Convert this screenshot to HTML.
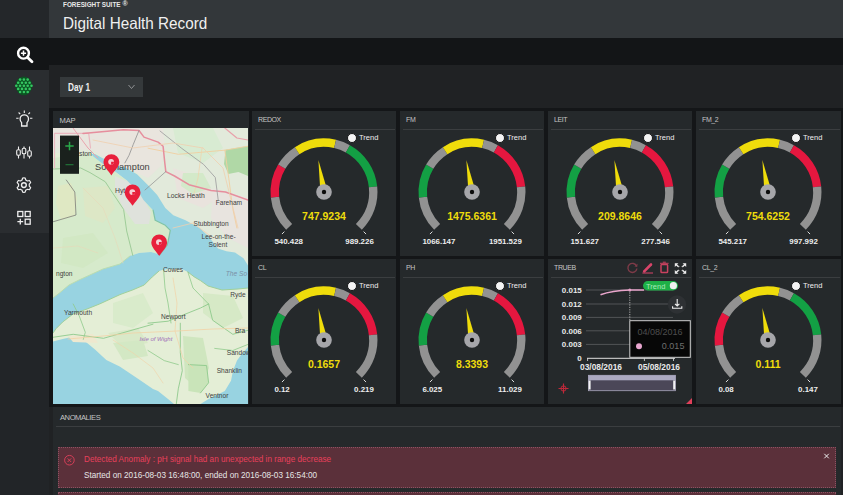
<!DOCTYPE html><html><head><meta charset="utf-8"><style>
*{margin:0;padding:0;box-sizing:border-box}
html,body{width:843px;height:495px;overflow:hidden;background:#202224;font-family:"Liberation Sans",sans-serif;position:relative}
.abs{position:absolute}
.panel{position:absolute;background:#25292b}
.ptitle{position:absolute;left:6px;top:5px;font-size:7px;color:#c4c4c4;letter-spacing:-0.4px}
.psep{position:absolute;left:3px;right:1px;top:18px;height:1px;background:#3b3e40}
.trend{position:absolute;left:92px;top:20px;width:40px;height:12px}
.trend .dot{position:absolute;left:3px;top:1.5px;width:10px;height:10px;border-radius:50%;background:#f4f4f4;border:1px solid #151617}
.trend .tt{position:absolute;left:15px;top:1.5px;font-size:7.5px;color:#eee;line-height:10px}
.gval{position:absolute;left:0;width:144px;text-align:center;font-size:10.5px;font-weight:bold;color:#efdc0b;line-height:12px}
.glab{position:absolute;width:60px;text-align:center;font-size:7.9px;font-weight:bold;color:#eee;line-height:10px}
</style></head><body>
<div class="abs" style="left:0;top:0;width:49px;height:38px;background:#24272a"></div>
<div class="abs" style="left:49px;top:0;width:794px;height:38px;background:#33373a"></div>
<div class="abs" style="left:63px;top:0px;font-size:7.3px;font-weight:bold;color:#e8e8e8;line-height:9px;transform:scaleX(0.87);transform-origin:0 0;white-space:nowrap">FORESIGHT SUITE</div><div class="abs" style="left:122.5px;top:0px;font-size:7px;font-weight:bold;color:#e8e8e8;line-height:8px">&#174;</div>
<div class="abs" style="left:62.5px;top:12.6px;font-size:16.5px;color:#f0f0f0;line-height:20px;transform:scaleX(0.925);transform-origin:0 0;white-space:nowrap">Digital Health Record</div>
<div class="abs" style="left:0;top:38px;width:49px;height:457px;background:#222528"></div><div class="abs" style="left:0;top:38px;width:49px;height:195px;background:#2a2d30"></div>
<div class="abs" style="left:0;top:38px;width:49px;height:32px;background:#131517"></div>
<div class="abs" style="left:49px;top:38px;width:794px;height:27px;background:#131517"></div>
<div class="abs" style="left:49px;top:65px;width:794px;height:430px;background:#202224"></div>
<div class="abs" style="left:49px;top:108px;width:794px;height:299px;background:#141618"></div>
<div class="abs" style="left:60px;top:77px;width:83px;height:20px;background:#35393b"></div>
<div class="abs" style="left:67.8px;top:81.5px;font-size:10.3px;font-weight:bold;color:#eee;line-height:12px;transform:scaleX(0.8);transform-origin:0 0;white-space:nowrap">Day 1</div><svg class="abs" style="left:127px;top:83px" width="9" height="8"><path d="M1.5,2 L4.5,5.5 L7.5,2" stroke="#9a9c9e" stroke-width="0.9" fill="none"/></svg>
<div class="panel" style="left:53px;top:111px;width:196px;height:293px"><div class="ptitle" style="font-size:7.6px;letter-spacing:-0.2px;left:6.5px">MAP</div></div>
<svg class="abs" style="left:53px;top:128px" width="195" height="276" viewBox="0 0 195 276" font-family="Liberation Sans, sans-serif"><rect x="0" y="0" width="195" height="276" fill="#e4eed6"/><path d="M0,0 L195,0 L195,137.4 L190.5,130.3 L182,124.6 L173.5,123.2 L165,120.4 L156,109 L141,100 L131,92 L120.3,87.2 L112.3,80.1 L104.2,67 L95,57 L84,46 L73,40 L63,38 L53,32 L42,25 L0,25Z" fill="#e2eadb" /><path d="M0,30 L38,25 L50,36 L61,43 L74,53 L86,64 L90,72 L100,82 L102,92 L112,97 L117.3,102.4 L116.3,107.4 L114.3,117 L107,126.5 L98,124 L86,125 L77,128 L67,136 L50,141 L20,155 L0,170Z" fill="#d6eacb" /><path d="M5,58 L18,55 L24,70 L22,88 L8,92 L3,75Z" fill="#dfe8c3" /><path d="M30,60 L55,58 L62,80 L50,95 L32,88Z" fill="#dde7c6" /><path d="M10,110 L40,105 L55,125 L30,140 L8,135Z" fill="#d2e8c4" /><path d="M0,0 L110,0 L112,20 L108,38 L95,50 L78,42 L60,36 L40,22 L0,20Z" fill="#e9e5de" /><path d="M62,48 L78,55 L90,70 L98,84 L96,96 L82,96 L70,80 L62,62Z" fill="#dfe2dc" /><path d="M120,40 L150,50 L165,70 L150,80 L125,70Z" fill="#e9e3dd" /><path d="M160,60 L195,70 L195,120 L175,110 L158,90Z" fill="#e8e4df" /><path d="M120,0 L160,0 L170,20 L150,35 L125,25Z" fill="#d8ebd2" /><path d="M172.5,21.8 L195,18 L195,48 L185.5,44 L175.4,46 L171,36Z" fill="#b0d8a6" /><path d="M130,45 L150,45 L158,60 L140,66 L128,58Z" fill="#d3e9c9" /><path d="M0,170 L6.5,165 L16,157 L26,152 L50,141 L67,136 L77,128 L86,125 L98,124 L107,126.5 L114.3,117 L116.3,107.4 L117.3,102.4 L112.3,97.3 L102.2,92.3 L100.1,82.2 L96,78 L90.5,72 L85.6,64 L74.3,52.7 L61.4,43 L50,36 L41,29 L38,26 L42,26 L53,32 L63,37.5 L72.7,39.8 L84,46.2 L95.3,57.5 L104.2,67 L112.3,80.1 L120.3,87.2 L132.5,92.3 L147,100.3 L155.6,108.6 L165,120.4 L173.5,123.2 L182,124.6 L190.5,130.3 L195,137.4 L195,160 L185,161 L169,162 L155,158 L147.5,152.6 L141.3,148.9 L134.9,144 L128.4,140.8 L110.6,141.6 L105.8,143.2 L99.3,148.9 L91.2,157 L80,161.8 L67,166.6 L46.5,176 L34,181 L20,186 L9.7,194 L3.2,200.5 L0,205Z" fill="#98d3e1" /><path d="M0,213.4 L9.7,211 L21,208.5 L32.3,213.4 L42,221.5 L53.3,232 L66.7,238.6 L85,250.7 L100,261 L105,263 L115,271 L121,276 L0,276Z" fill="#98d3e1" /><path d="M195,219 L188,227 L184,232.6 L180,242.7 L178,252.8 L171.8,263 L155.6,271 L147.5,276 L195,276Z" fill="#98d3e1" /><path d="M0,170 L6.5,165 L16,157 L26,152 L50,141 L67,136 L77,128" fill="none" stroke="#b9dcb0" stroke-width="1.0" stroke-linejoin="round" stroke-linecap="round" /><path d="M0,205 L3.2,200.5 L9.7,194 L20,186 L34,181 L46.5,176 L67,166.6 L80,161.8 L91.2,157 L99.3,148.9 L105.8,143.2" fill="none" stroke="#9fd09a" stroke-width="1.0" stroke-linejoin="round" stroke-linecap="round" /><path d="M134.9,144 L141.3,148.9 L147.5,152.6 L155,158 L169,162 L185,161 L195,160" fill="none" stroke="#9fd09a" stroke-width="1.0" stroke-linejoin="round" stroke-linecap="round" /><path d="M100.1,82.2 L102.2,92.3 L112.3,97.3 L117.3,102.4 L116.3,107.4 L114.3,117 L107,126.5" fill="none" stroke="#7fc3a6" stroke-width="1.2" stroke-linejoin="round" stroke-linecap="round" /><path d="M0,41 L27.7,40 L37,44.6 L52.2,53.7 L58.3,63 L70.6,81.4 L73.7,103 L79.8,127.5" fill="none" stroke="#98c893" stroke-width="0.9" stroke-linejoin="round" stroke-linecap="round" /><path d="M95,20.2 L125.3,26.3 L171.8,22.2 L195,18.2" fill="none" stroke="#f0cfa0" stroke-width="0.9" stroke-linejoin="round" stroke-linecap="round" /><path d="M171.8,22.2 L175.8,50.5 L179.8,80.8 L183.9,100" fill="none" stroke="#f0cfa0" stroke-width="0.9" stroke-linejoin="round" stroke-linecap="round" /><path d="M149,20 L145,50 L141,66" fill="none" stroke="#f0d2aa" stroke-width="0.7" stroke-linejoin="round" stroke-linecap="round" /><path d="M30,60 L50,80 L62,110 L70,135" fill="none" stroke="#e8d9b8" stroke-width="0.6" stroke-linejoin="round" stroke-linecap="round" /><path d="M0,120 L25,118 L45,125" fill="none" stroke="#e8d9b8" stroke-width="0.6" stroke-linejoin="round" stroke-linecap="round" /><path d="M60,175 L90,165 L100,185 L80,200 L60,195Z" fill="#d9ebcb" /><path d="M150,165 L180,168 L190,190 L170,200 L150,185Z" fill="#d6e9c6" /><path d="M130,208 L150,210 L156,240 L146,262 L132,250Z" fill="#cfe6bf" /><path d="M55,205 L85,200 L95,215 L70,220Z" fill="#d9e9c8" /><path d="M15,208 L40,206 L45,215 L20,214Z" fill="#eee8cf" /><path d="M1.5,40 L1.5,5.4 L35.7,5.4 L37.5,20" fill="none" stroke="#eab8c0" stroke-width="1.2" stroke-linejoin="round" stroke-linecap="round" /><path d="M30,5.4 L70.3,1.7 L86,2.5 L91,9.1 L105.1,14.1 L110.1,18.3 L111.8,34.9 L112.8,43.6 L121.5,48 L136,56.7 L158,62.5 L172.5,64 L195,72" fill="none" stroke="#e68e9d" stroke-width="1.5" stroke-linejoin="round" stroke-linecap="round" /><path d="M86,2.5 L80.2,16.6 L76,27.4 L71.9,34.9" fill="none" stroke="#8f8f8f" stroke-width="0.8" stroke-linejoin="round" stroke-linecap="round" /><path d="M171.8,0 L183.9,10 L195,12" fill="none" stroke="#e8a0aa" stroke-width="1.2" stroke-linejoin="round" stroke-linecap="round" /><path d="M107,3 L128.8,20.4 L150.6,36.4 L162.3,49.5 L165.2,72" fill="none" stroke="#a3a3a3" stroke-width="0.9" stroke-linejoin="round" stroke-linecap="round" /><path d="M20,0 L35,20 L45,30" fill="none" stroke="#e9a4ae" stroke-width="1.0" stroke-linejoin="round" stroke-linecap="round" /><path d="M40,12 L80,20 L120,15 L150,20" fill="none" stroke="#f0cfae" stroke-width="0.8" stroke-linejoin="round" stroke-linecap="round" /><path d="M13.3,52 L21.8,64 L23,87 L0,93.8" fill="none" stroke="#6f6f6f" stroke-width="0.7" stroke-linejoin="round" stroke-linecap="round" /><path d="M112.8,43.6 L100,55 L92,62" fill="none" stroke="#8c8c8c" stroke-width="0.7" stroke-linejoin="round" stroke-linecap="round" /><path d="M120,100 L140,95 L160,110" fill="none" stroke="#f0cfae" stroke-width="0.8" stroke-linejoin="round" stroke-linecap="round" /><path d="M150,20 L170,40 L175,60 L185,100" fill="none" stroke="#f0cfae" stroke-width="0.8" stroke-linejoin="round" stroke-linecap="round" /><path d="M135.4,236.6 L153.6,236.6 L155.6,254.8 L147.5,264.9 L135.4,262.9Z" fill="#c9e4b9" /><path d="M60,215 L90,212 L95,228 L70,232Z" fill="#d3e8c4" /><path d="M95,195.2 L115.2,193.2 L127.3,188.1 L147.5,180 L155.6,176" fill="none" stroke="#8fca8c" stroke-width="0.9" stroke-linejoin="round" stroke-linecap="round" /><path d="M127.3,195.2 L127.3,224.5 L129.3,242.7 L125.3,260.8 L123.3,276" fill="none" stroke="#8fca8c" stroke-width="0.9" stroke-linejoin="round" stroke-linecap="round" /><path d="M135.4,236.6 L153.6,237.6 L155.6,254.8 L147.5,264.9" fill="none" stroke="#8fca8c" stroke-width="0.9" stroke-linejoin="round" stroke-linecap="round" /><path d="M155.6,176 L159.6,192.2 L179.8,206.3 L195,202.3" fill="none" stroke="#8fca8c" stroke-width="0.9" stroke-linejoin="round" stroke-linecap="round" /><path d="M161.7,220.4 L179.8,222.5 L195,216.4" fill="none" stroke="#8fca8c" stroke-width="0.8" stroke-linejoin="round" stroke-linecap="round" /><path d="M95,222.5 L111.2,232.6 L125.3,236.6" fill="none" stroke="#8fca8c" stroke-width="0.8" stroke-linejoin="round" stroke-linecap="round" /><path d="M0,209.3 L20.2,206.3 L50.5,210.3 L100,196.2" fill="none" stroke="#8fca8c" stroke-width="0.9" stroke-linejoin="round" stroke-linecap="round" /><path d="M20.2,176 L26.3,188.1 L32.3,204.3 L30.3,211.4" fill="none" stroke="#8fca8c" stroke-width="0.8" stroke-linejoin="round" stroke-linecap="round" /><path d="M110.6,141.6 L112,160 L115,175 L118,195" fill="none" stroke="#8fca8c" stroke-width="0.8" stroke-linejoin="round" stroke-linecap="round" /><path d="M134.9,144 L140,160 L155.6,176" fill="none" stroke="#8fca8c" stroke-width="0.8" stroke-linejoin="round" stroke-linecap="round" /><path d="M15,211 L50,208 L80,205 L124,203 L160,201 L195,200" fill="none" stroke="#f2d2a6" stroke-width="0.8" stroke-linejoin="round" stroke-linecap="round" /><path d="M120,150 L124,175 L122,203 L130,230 L140,240" fill="none" stroke="#f2d2a6" stroke-width="0.7" stroke-linejoin="round" stroke-linecap="round" /><path d="M60,212 L80,225 L100,240 L110,255" fill="none" stroke="#f2d2a6" stroke-width="0.6" stroke-linejoin="round" stroke-linecap="round" /><text x="42" y="41.5" font-size="9.2" fill="#3f3f3f" >Southampton</text><text x="26" y="28" font-size="6.8" fill="#3f3f3f" >ston</text><text x="62" y="65" font-size="6.8" fill="#3f3f3f" >Hyt</text><text x="114" y="70" font-size="6.8" fill="#3f3f3f" >Locks Heath</text><text x="162.7" y="77" font-size="6.6" fill="#3f3f3f" >Fareham</text><text x="140.5" y="98" font-size="6.6" fill="#3f3f3f" >Stubbington</text><text x="148.5" y="111" font-size="6.6" fill="#3f3f3f" >Lee-on-the-</text><text x="155.6" y="119" font-size="6.6" fill="#3f3f3f" >Solent</text><text x="110" y="144" font-size="6.6" fill="#3f3f3f" >Cowes</text><text x="3" y="148" font-size="6.6" fill="#3f3f3f" >ngton</text><text x="11" y="187" font-size="6.6" fill="#3f3f3f" >Yarmouth</text><text x="177.3" y="169" font-size="6.6" fill="#3f3f3f" >Ryde</text><text x="108" y="191" font-size="6.6" fill="#3f3f3f" >Newport</text><text x="181.9" y="205" font-size="6.6" fill="#3f3f3f" >Bra</text><text x="173.8" y="227" font-size="6.6" fill="#3f3f3f" >Sandow</text><text x="163.7" y="244.5" font-size="6.6" fill="#3f3f3f" >Shanklin</text><text x="152.6" y="269.5" font-size="6.6" fill="#3f3f3f" >Ventnor</text><text x="86.4" y="213" font-size="6" fill="#a070b8" font-style="italic">Isle of Wight</text><text x="172.8" y="148" font-size="6.6" fill="#7b8fa6" font-style="italic">The So</text><rect x="7" y="7.6" width="19" height="38.2" fill="#1a211d"/><path d="M16.5,13.8 V22.2 M12.3,18 H20.7" stroke="#2aa84a" stroke-width="1.5"/><path d="M12.5,36.7 H20.5" stroke="#227a3a" stroke-width="1.1"/><path d="M58.4,47.5 C55.635,43.0 50.5,38.84 50.5,34.1 A7.9,7.9 0 1 1 66.3,34.1 C66.3,38.84 61.165,43.0 58.4,47.5Z" fill="#e8203c"/><circle cx="58.1" cy="33.800000000000004" r="2.9" fill="#f6d0d6"/><path d="M58.1,33.800000000000004 L61.0,33.800000000000004 A2.9,2.9 0 0 1 58.1,36.7Z" fill="#e8203c"/><path d="M79.6,77.8 C76.835,73.3 71.69999999999999,69.14 71.69999999999999,64.4 A7.9,7.9 0 1 1 87.5,64.4 C87.5,69.14 82.365,73.3 79.6,77.8Z" fill="#e8203c"/><circle cx="79.3" cy="64.10000000000001" r="2.9" fill="#f6d0d6"/><path d="M79.3,64.10000000000001 L82.19999999999999,64.10000000000001 A2.9,2.9 0 0 1 79.3,67.0Z" fill="#e8203c"/><path d="M106.2,128 C103.435,123.5 98.3,119.14 98.3,114.4 A7.9,7.9 0 1 1 114.10000000000001,114.4 C114.10000000000001,119.14 108.965,123.5 106.2,128Z" fill="#e8203c"/><circle cx="105.9" cy="114.10000000000001" r="2.9" fill="#f6d0d6"/><path d="M105.9,114.10000000000001 L108.8,114.10000000000001 A2.9,2.9 0 0 1 105.9,117.0Z" fill="#e8203c"/></svg>
<div class="panel" style="left:252px;top:111px;width:144px;height:145px">
<div class="ptitle">REDOX</div><div class="psep"></div>
<div class="trend"><span class="dot"></span><span class="tt">Trend</span></div>
<div class="gval" style="top:99px">747.9234</div>
<div class="glab" style="left:22.4px;top:125.6px;text-align:left">540.428</div>
<div class="glab" style="left:61.8px;top:125.6px;text-align:right">989.226</div>
</div><div class="panel" style="left:400px;top:111px;width:144px;height:145px">
<div class="ptitle">FM</div><div class="psep"></div>
<div class="trend"><span class="dot"></span><span class="tt">Trend</span></div>
<div class="gval" style="top:99px">1475.6361</div>
<div class="glab" style="left:22.4px;top:125.6px;text-align:left">1066.147</div>
<div class="glab" style="left:61.8px;top:125.6px;text-align:right">1951.529</div>
</div><div class="panel" style="left:548px;top:111px;width:144px;height:145px">
<div class="ptitle">LEIT</div><div class="psep"></div>
<div class="trend"><span class="dot"></span><span class="tt">Trend</span></div>
<div class="gval" style="top:99px">209.8646</div>
<div class="glab" style="left:22.4px;top:125.6px;text-align:left">151.627</div>
<div class="glab" style="left:61.8px;top:125.6px;text-align:right">277.546</div>
</div><div class="panel" style="left:696px;top:111px;width:145px;height:145px">
<div class="ptitle">FM_2</div><div class="psep"></div>
<div class="trend"><span class="dot"></span><span class="tt">Trend</span></div>
<div class="gval" style="top:99px">754.6252</div>
<div class="glab" style="left:22.4px;top:125.6px;text-align:left">545.217</div>
<div class="glab" style="left:61.8px;top:125.6px;text-align:right">997.992</div>
</div><div class="panel" style="left:252px;top:259px;width:144px;height:145px">
<div class="ptitle">CL</div><div class="psep"></div>
<div class="trend"><span class="dot"></span><span class="tt">Trend</span></div>
<div class="gval" style="top:99px">0.1657</div>
<div class="glab" style="left:22.4px;top:125.6px;text-align:left">0.12</div>
<div class="glab" style="left:61.8px;top:125.6px;text-align:right">0.219</div>
</div><div class="panel" style="left:400px;top:259px;width:144px;height:145px">
<div class="ptitle">PH</div><div class="psep"></div>
<div class="trend"><span class="dot"></span><span class="tt">Trend</span></div>
<div class="gval" style="top:99px">8.3393</div>
<div class="glab" style="left:22.4px;top:125.6px;text-align:left">6.025</div>
<div class="glab" style="left:61.8px;top:125.6px;text-align:right">11.029</div>
</div><div class="panel" style="left:696px;top:259px;width:145px;height:145px">
<div class="ptitle">CL_2</div><div class="psep"></div>
<div class="trend"><span class="dot"></span><span class="tt">Trend</span></div>
<div class="gval" style="top:99px">0.111</div>
<div class="glab" style="left:22.4px;top:125.6px;text-align:left">0.08</div>
<div class="glab" style="left:61.8px;top:125.6px;text-align:right">0.147</div>
</div>
<div class="panel" style="left:548px;top:259px;width:144px;height:145px"><div class="ptitle">TRUEB</div><div class="psep"></div></div>
<div class="panel" style="left:53px;top:407px;width:788px;height:88px"><div class="ptitle" style="left:7px;top:5.5px;font-size:7.6px;letter-spacing:-0.45px">ANOMALIES</div><div class="psep" style="top:19px"></div></div>
<div class="abs" style="left:58px;top:447px;width:778px;height:41px;background:#5b303a;border:1px dotted #8d5262"></div>
<div class="abs" style="left:58px;top:491.5px;width:778px;height:10px;background:#5b303a;border:1px dotted #8d5262"></div>
<div class="abs" style="left:84px;top:453.5px;font-size:8.2px;color:#e8405a;line-height:11px">Detected Anomaly : pH signal had an unexpected in range decrease</div>
<div class="abs" style="left:84px;top:470px;font-size:8.2px;color:#e6e6e6;line-height:11px">Started on 2016-08-03 16:48:00, ended on 2016-08-03 16:54:00</div>
<svg class="abs" style="left:0;top:0" width="843" height="495" viewBox="0 0 843 495">
<path d="M289.14,226.86 A49.3,49.3 0 0 1 274.97,197.15" stroke="#929292" stroke-width="8.4" fill="none"/><path d="M274.97,197.15 A49.3,49.3 0 0 1 281.74,166.61" stroke="#e5173f" stroke-width="8.4" fill="none"/><path d="M281.74,166.61 A49.3,49.3 0 0 1 297.15,150.65" stroke="#929292" stroke-width="8.4" fill="none"/><path d="M297.15,150.65 A49.3,49.3 0 0 1 335.09,143.96" stroke="#efdc0b" stroke-width="8.4" fill="none"/><path d="M335.09,143.96 A49.3,49.3 0 0 1 347.90,148.88" stroke="#929292" stroke-width="8.4" fill="none"/><path d="M347.90,148.88 A49.3,49.3 0 0 1 373.03,186.85" stroke="#13a044" stroke-width="8.4" fill="none"/><path d="M373.03,186.85 A49.3,49.3 0 0 1 358.86,226.86" stroke="#929292" stroke-width="8.4" fill="none"/><line x1="284.40" y1="231.60" x2="281.93" y2="234.07" stroke="#ddd" stroke-width="1"/><line x1="363.60" y1="231.60" x2="366.07" y2="234.07" stroke="#ddd" stroke-width="1"/><path d="M318.36,159.99 L320.45,192.63 L327.55,191.37Z" fill="#efdc0b"/><circle cx="324" cy="192" r="7.8" fill="#a6a6aa"/><circle cx="324" cy="192" r="2.2" fill="#0c0c0c"/><path d="M437.14,226.86 A49.3,49.3 0 0 1 422.97,197.15" stroke="#929292" stroke-width="8.4" fill="none"/><path d="M422.97,197.15 A49.3,49.3 0 0 1 429.74,166.61" stroke="#13a044" stroke-width="8.4" fill="none"/><path d="M429.74,166.61 A49.3,49.3 0 0 1 445.15,150.65" stroke="#929292" stroke-width="8.4" fill="none"/><path d="M445.15,150.65 A49.3,49.3 0 0 1 483.09,143.96" stroke="#efdc0b" stroke-width="8.4" fill="none"/><path d="M483.09,143.96 A49.3,49.3 0 0 1 495.90,148.88" stroke="#929292" stroke-width="8.4" fill="none"/><path d="M495.90,148.88 A49.3,49.3 0 0 1 521.03,186.85" stroke="#e5173f" stroke-width="8.4" fill="none"/><path d="M521.03,186.85 A49.3,49.3 0 0 1 506.86,226.86" stroke="#929292" stroke-width="8.4" fill="none"/><line x1="432.40" y1="231.60" x2="429.93" y2="234.07" stroke="#ddd" stroke-width="1"/><line x1="511.60" y1="231.60" x2="514.07" y2="234.07" stroke="#ddd" stroke-width="1"/><path d="M466.36,159.99 L468.45,192.63 L475.55,191.37Z" fill="#efdc0b"/><circle cx="472" cy="192" r="7.8" fill="#a6a6aa"/><circle cx="472" cy="192" r="2.2" fill="#0c0c0c"/><path d="M585.14,226.86 A49.3,49.3 0 0 1 570.97,197.15" stroke="#929292" stroke-width="8.4" fill="none"/><path d="M570.97,197.15 A49.3,49.3 0 0 1 577.74,166.61" stroke="#13a044" stroke-width="8.4" fill="none"/><path d="M577.74,166.61 A49.3,49.3 0 0 1 593.15,150.65" stroke="#929292" stroke-width="8.4" fill="none"/><path d="M593.15,150.65 A49.3,49.3 0 0 1 631.09,143.96" stroke="#efdc0b" stroke-width="8.4" fill="none"/><path d="M631.09,143.96 A49.3,49.3 0 0 1 643.90,148.88" stroke="#929292" stroke-width="8.4" fill="none"/><path d="M643.90,148.88 A49.3,49.3 0 0 1 669.03,186.85" stroke="#e5173f" stroke-width="8.4" fill="none"/><path d="M669.03,186.85 A49.3,49.3 0 0 1 654.86,226.86" stroke="#929292" stroke-width="8.4" fill="none"/><line x1="580.40" y1="231.60" x2="577.93" y2="234.07" stroke="#ddd" stroke-width="1"/><line x1="659.60" y1="231.60" x2="662.07" y2="234.07" stroke="#ddd" stroke-width="1"/><path d="M614.36,159.99 L616.45,192.63 L623.55,191.37Z" fill="#efdc0b"/><circle cx="620" cy="192" r="7.8" fill="#a6a6aa"/><circle cx="620" cy="192" r="2.2" fill="#0c0c0c"/><path d="M733.14,226.86 A49.3,49.3 0 0 1 718.97,197.15" stroke="#929292" stroke-width="8.4" fill="none"/><path d="M718.97,197.15 A49.3,49.3 0 0 1 725.74,166.61" stroke="#13a044" stroke-width="8.4" fill="none"/><path d="M725.74,166.61 A49.3,49.3 0 0 1 741.15,150.65" stroke="#929292" stroke-width="8.4" fill="none"/><path d="M741.15,150.65 A49.3,49.3 0 0 1 779.09,143.96" stroke="#efdc0b" stroke-width="8.4" fill="none"/><path d="M779.09,143.96 A49.3,49.3 0 0 1 791.90,148.88" stroke="#929292" stroke-width="8.4" fill="none"/><path d="M791.90,148.88 A49.3,49.3 0 0 1 817.03,186.85" stroke="#e5173f" stroke-width="8.4" fill="none"/><path d="M817.03,186.85 A49.3,49.3 0 0 1 802.86,226.86" stroke="#929292" stroke-width="8.4" fill="none"/><line x1="728.40" y1="231.60" x2="725.93" y2="234.07" stroke="#ddd" stroke-width="1"/><line x1="807.60" y1="231.60" x2="810.07" y2="234.07" stroke="#ddd" stroke-width="1"/><path d="M762.36,159.99 L764.45,192.63 L771.55,191.37Z" fill="#efdc0b"/><circle cx="768" cy="192" r="7.8" fill="#a6a6aa"/><circle cx="768" cy="192" r="2.2" fill="#0c0c0c"/><path d="M289.14,374.86 A49.3,49.3 0 0 1 274.97,345.15" stroke="#929292" stroke-width="8.4" fill="none"/><path d="M274.97,345.15 A49.3,49.3 0 0 1 281.74,314.61" stroke="#13a044" stroke-width="8.4" fill="none"/><path d="M281.74,314.61 A49.3,49.3 0 0 1 297.15,298.65" stroke="#929292" stroke-width="8.4" fill="none"/><path d="M297.15,298.65 A49.3,49.3 0 0 1 335.09,291.96" stroke="#efdc0b" stroke-width="8.4" fill="none"/><path d="M335.09,291.96 A49.3,49.3 0 0 1 347.90,296.88" stroke="#929292" stroke-width="8.4" fill="none"/><path d="M347.90,296.88 A49.3,49.3 0 0 1 373.03,334.85" stroke="#e5173f" stroke-width="8.4" fill="none"/><path d="M373.03,334.85 A49.3,49.3 0 0 1 358.86,374.86" stroke="#929292" stroke-width="8.4" fill="none"/><line x1="284.40" y1="379.60" x2="281.93" y2="382.07" stroke="#ddd" stroke-width="1"/><line x1="363.60" y1="379.60" x2="366.07" y2="382.07" stroke="#ddd" stroke-width="1"/><path d="M318.36,307.99 L320.45,340.63 L327.55,339.37Z" fill="#efdc0b"/><circle cx="324" cy="340" r="7.8" fill="#a6a6aa"/><circle cx="324" cy="340" r="2.2" fill="#0c0c0c"/><path d="M437.14,374.86 A49.3,49.3 0 0 1 422.97,345.15" stroke="#929292" stroke-width="8.4" fill="none"/><path d="M422.97,345.15 A49.3,49.3 0 0 1 429.74,314.61" stroke="#13a044" stroke-width="8.4" fill="none"/><path d="M429.74,314.61 A49.3,49.3 0 0 1 445.15,298.65" stroke="#929292" stroke-width="8.4" fill="none"/><path d="M445.15,298.65 A49.3,49.3 0 0 1 483.09,291.96" stroke="#efdc0b" stroke-width="8.4" fill="none"/><path d="M483.09,291.96 A49.3,49.3 0 0 1 495.90,296.88" stroke="#929292" stroke-width="8.4" fill="none"/><path d="M495.90,296.88 A49.3,49.3 0 0 1 521.03,334.85" stroke="#e5173f" stroke-width="8.4" fill="none"/><path d="M521.03,334.85 A49.3,49.3 0 0 1 506.86,374.86" stroke="#929292" stroke-width="8.4" fill="none"/><line x1="432.40" y1="379.60" x2="429.93" y2="382.07" stroke="#ddd" stroke-width="1"/><line x1="511.60" y1="379.60" x2="514.07" y2="382.07" stroke="#ddd" stroke-width="1"/><path d="M466.36,307.99 L468.45,340.63 L475.55,339.37Z" fill="#efdc0b"/><circle cx="472" cy="340" r="7.8" fill="#a6a6aa"/><circle cx="472" cy="340" r="2.2" fill="#0c0c0c"/><path d="M733.14,374.86 A49.3,49.3 0 0 1 718.97,345.15" stroke="#929292" stroke-width="8.4" fill="none"/><path d="M718.97,345.15 A49.3,49.3 0 0 1 725.74,314.61" stroke="#e5173f" stroke-width="8.4" fill="none"/><path d="M725.74,314.61 A49.3,49.3 0 0 1 741.15,298.65" stroke="#929292" stroke-width="8.4" fill="none"/><path d="M741.15,298.65 A49.3,49.3 0 0 1 779.09,291.96" stroke="#efdc0b" stroke-width="8.4" fill="none"/><path d="M779.09,291.96 A49.3,49.3 0 0 1 791.90,296.88" stroke="#929292" stroke-width="8.4" fill="none"/><path d="M791.90,296.88 A49.3,49.3 0 0 1 817.03,334.85" stroke="#13a044" stroke-width="8.4" fill="none"/><path d="M817.03,334.85 A49.3,49.3 0 0 1 802.86,374.86" stroke="#929292" stroke-width="8.4" fill="none"/><line x1="728.40" y1="379.60" x2="725.93" y2="382.07" stroke="#ddd" stroke-width="1"/><line x1="807.60" y1="379.60" x2="810.07" y2="382.07" stroke="#ddd" stroke-width="1"/><path d="M762.36,307.99 L764.45,340.63 L771.55,339.37Z" fill="#efdc0b"/><circle cx="768" cy="340" r="7.8" fill="#a6a6aa"/><circle cx="768" cy="340" r="2.2" fill="#0c0c0c"/><line x1="586" y1="290" x2="673" y2="290" stroke="#5d6062" stroke-width="0.8"/><text x="581.8" y="292.9" font-size="8" font-weight="bold" fill="#e9e9e9" text-anchor="end">0.015</text><line x1="586" y1="304" x2="673" y2="304" stroke="#5d6062" stroke-width="0.8"/><text x="581.8" y="306.9" font-size="8" font-weight="bold" fill="#e9e9e9" text-anchor="end">0.012</text><line x1="586" y1="317.4" x2="673" y2="317.4" stroke="#5d6062" stroke-width="0.8"/><text x="581.8" y="320.29999999999995" font-size="8" font-weight="bold" fill="#e9e9e9" text-anchor="end">0.009</text><line x1="586" y1="330.8" x2="673" y2="330.8" stroke="#5d6062" stroke-width="0.8"/><text x="581.8" y="333.7" font-size="8" font-weight="bold" fill="#e9e9e9" text-anchor="end">0.006</text><line x1="586" y1="344.4" x2="673" y2="344.4" stroke="#5d6062" stroke-width="0.8"/><text x="581.8" y="347.29999999999995" font-size="8" font-weight="bold" fill="#e9e9e9" text-anchor="end">0.003</text><text x="581.8" y="360.7" font-size="8" font-weight="bold" fill="#e9e9e9" text-anchor="end">0</text><line x1="587" y1="358.3" x2="675" y2="358.3" stroke="#e0e0e0" stroke-width="1"/><line x1="587.6" y1="358.3" x2="587.6" y2="361" stroke="#e0e0e0" stroke-width="0.8"/><line x1="644.4" y1="358.3" x2="644.4" y2="361" stroke="#e0e0e0" stroke-width="0.8"/><line x1="673.5" y1="358.3" x2="673.5" y2="361" stroke="#e0e0e0" stroke-width="0.8"/><text x="601" y="370" font-size="8.4" font-weight="bold" fill="#e9e9e9" text-anchor="middle">03/08/2016</text><text x="659" y="370" font-size="8.4" font-weight="bold" fill="#e9e9e9" text-anchor="middle">05/08/2016</text><path d="M600.5,294.8 Q612,290.5 629.8,290 L644,290" stroke="#e9a5cb" stroke-width="1.7" fill="none"/><line x1="629.8" y1="290" x2="629.8" y2="320" stroke="#cfcfcf" stroke-width="0.8" stroke-dasharray="1.2,1.2"/><circle cx="629.8" cy="290" r="1.5" fill="#e7a3c9"/><rect x="643" y="281" width="35" height="9.5" rx="4.75" fill="#1db047"/><text x="646" y="288.5" font-size="7.5" fill="#a6e8b8">Trend</text><circle cx="673.4" cy="285.7" r="3.6" fill="#f0f0f0"/><circle cx="677" cy="304.5" r="9.2" fill="#2e3134"/><path d="M677.2,299 V305.8 M675,303.8 L677.2,306 L679.4,303.8 M672.6,306.2 V308.2 H681.8 V306.2" stroke="#f0f0f0" stroke-width="1.1" fill="none"/><rect x="629.8" y="320.7" width="60.5" height="36.6" fill="#070707" stroke="#cfcfcf" stroke-width="1"/><text x="660" y="334.5" font-size="9" fill="#4e4e4e" text-anchor="middle">04/08/2016</text><text x="684.4" y="349.3" font-size="9" fill="#6e6e6e" text-anchor="end">0.015</text><circle cx="639" cy="346.3" r="3" fill="#e8a6cf"/><path d="M636.6,266.2 A4.5,4.5 0 1 0 636.9,268.5" stroke="#7d3b48" stroke-width="1.4" fill="none"/><path d="M637.6,263.8 L637.2,267 L634.3,266.2Z" fill="#7d3b48"/><path d="M644.2,271.3 L651,264.5" stroke="#d9456a" stroke-width="2.6" stroke-linecap="round"/><path d="M642.4,273 H653" stroke="#d9456a" stroke-width="1"/><rect x="661" y="264.5" width="6.6" height="8" rx="0.8" stroke="#c9425f" stroke-width="1.5" fill="none"/><path d="M660,263.3 H668.6 M662.8,262.2 H665.8" stroke="#c9425f" stroke-width="1"/><path d="M675.5,264 L685.5,273 M685.5,264 L675.5,273" stroke="#ececec" stroke-width="1.5"/><path d="M674.8,263.3 h3.6 l-3.6,3.6Z M686.2,263.3 h-3.6 l3.6,3.6Z M674.8,273.7 h3.6 l-3.6,-3.6Z M686.2,273.7 h-3.6 l3.6,-3.6Z" fill="#ececec"/><rect x="678.3" y="266.8" width="4.4" height="3.4" fill="#25282a"/><rect x="588.4" y="375.3" width="87" height="15.4" fill="#4b4758" stroke="#a9a6bd" stroke-width="0.8"/><rect x="588.4" y="375.3" width="87" height="5" fill="#aaa8c0"/><rect x="588.6" y="380.5" width="2" height="9" fill="#f4f4f4"/><rect x="673.2" y="380.5" width="2" height="9" fill="#f4f4f4"/><path d="M563.5,383.5 V393.5 M558.5,388.5 H568.5" stroke="#c0283a" stroke-width="1.1"/><circle cx="563.5" cy="388.5" r="2.6" stroke="#c0283a" stroke-width="1" fill="none"/><path d="M692,398 L692,404 L686,404Z" fill="#e0405a"/><circle cx="23.5" cy="53.2" r="5.4" stroke="#fff" stroke-width="2.4" fill="none"/><path d="M27.6,57.4 L32,61.8" stroke="#fff" stroke-width="2.8" stroke-linecap="round"/><path d="M23.5,50.6 V55.8 M20.9,53.2 H26.1" stroke="#fff" stroke-width="1.5"/><ellipse cx="23.9" cy="85.8" rx="8.3" ry="9.4" fill="#0b5422"/><circle cx="20.10" cy="79.60" r="1.3" fill="#35c662"/><circle cx="23.90" cy="79.60" r="1.3" fill="#35c662"/><circle cx="27.70" cy="79.60" r="1.3" fill="#35c662"/><circle cx="18.20" cy="82.70" r="1.3" fill="#35c662"/><circle cx="22.00" cy="82.70" r="1.3" fill="#35c662"/><circle cx="25.80" cy="82.70" r="1.3" fill="#35c662"/><circle cx="29.60" cy="82.70" r="1.3" fill="#35c662"/><circle cx="16.30" cy="85.80" r="1.3" fill="#35c662"/><circle cx="20.10" cy="85.80" r="1.3" fill="#35c662"/><circle cx="23.90" cy="85.80" r="1.3" fill="#35c662"/><circle cx="27.70" cy="85.80" r="1.3" fill="#35c662"/><circle cx="31.50" cy="85.80" r="1.3" fill="#35c662"/><circle cx="18.20" cy="88.90" r="1.3" fill="#35c662"/><circle cx="22.00" cy="88.90" r="1.3" fill="#35c662"/><circle cx="25.80" cy="88.90" r="1.3" fill="#35c662"/><circle cx="29.60" cy="88.90" r="1.3" fill="#35c662"/><circle cx="20.10" cy="92.00" r="1.3" fill="#35c662"/><circle cx="23.90" cy="92.00" r="1.3" fill="#35c662"/><circle cx="27.70" cy="92.00" r="1.3" fill="#35c662"/><path d="M21.6,122.6 C20.6,121.6 20.1,120.4 20.1,119 A4.2,4.2 0 0 1 28.5,119 C28.5,120.4 28,121.6 27,122.6 V126 H21.6Z" stroke="#eee" stroke-width="1.3" fill="none"/><path d="M24.3,110.5 V113 M18.6,112.5 L20.2,114.1 M30,112.5 L28.4,114.1 M16.2,118.3 H18.6 M30,118.3 H32.4" stroke="#eee" stroke-width="1.1"/><line x1="18.5" y1="146.5" x2="18.5" y2="158.5" stroke="#eee" stroke-width="1.1"/><rect x="16.7" y="149.7" width="3.6" height="5.6" rx="1.3" fill="#2b2e30" stroke="#eee" stroke-width="1.1"/><line x1="24" y1="146.5" x2="24" y2="158.5" stroke="#eee" stroke-width="1.1"/><rect x="22.2" y="148.2" width="3.6" height="5.6" rx="1.3" fill="#2b2e30" stroke="#eee" stroke-width="1.1"/><line x1="29.5" y1="146.5" x2="29.5" y2="158.5" stroke="#eee" stroke-width="1.1"/><rect x="27.7" y="150.7" width="3.6" height="5.6" rx="1.3" fill="#2b2e30" stroke="#eee" stroke-width="1.1"/><path d="M23.90,192.30 L22.65,192.19 L22.05,190.17 L21.20,189.78 L20.43,189.24 L18.38,189.73 L17.66,188.70 L17.13,187.56 L18.58,186.04 L18.50,185.10 L18.58,184.16 L17.13,182.64 L17.66,181.50 L18.38,180.47 L20.43,180.96 L21.20,180.42 L22.05,180.03 L22.65,178.01 L23.90,177.90 L25.15,178.01 L25.75,180.03 L26.60,180.42 L27.37,180.96 L29.42,180.47 L30.14,181.50 L30.67,182.64 L29.22,184.16 L29.30,185.10 L29.22,186.04 L30.67,187.56 L30.14,188.70 L29.42,189.73 L27.37,189.24 L26.60,189.78 L25.75,190.17 L25.15,192.19Z" stroke="#eee" stroke-width="1.2" fill="none" stroke-linejoin="round"/><circle cx="23.9" cy="185.1" r="2.4" stroke="#eee" stroke-width="1.4" fill="none"/><rect x="17.8" y="211.5" width="5" height="5" stroke="#eee" stroke-width="1.3" fill="none"/><rect x="25.2" y="211.5" width="5" height="5" stroke="#eee" stroke-width="1.3" fill="none"/><rect x="25.2" y="219.2" width="5" height="5" stroke="#eee" stroke-width="1.3" fill="none"/><path d="M20.3,218.8 V224.6 M17.4,221.7 H23.2" stroke="#eee" stroke-width="1.3"/><circle cx="69.4" cy="460.2" r="4.8" stroke="#e0405a" stroke-width="0.9" fill="none"/><path d="M67.6,458.4 L71.2,462 M71.2,458.4 L67.6,462" stroke="#e0405a" stroke-width="0.9"/><path d="M824.3,453.8 L828.8,458.3 M828.8,453.8 L824.3,458.3" stroke="#eee" stroke-width="1"/>
</svg>
</body></html>
